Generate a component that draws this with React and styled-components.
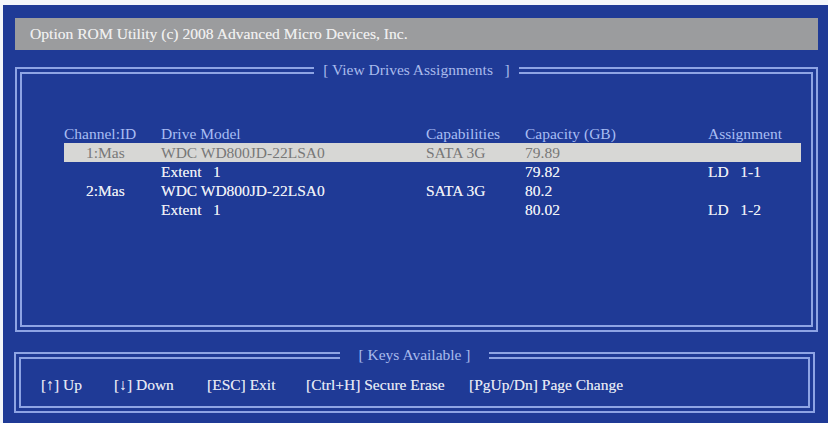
import React from "react";
import styled, { createGlobalStyle } from "styled-components";

const GlobalStyle = createGlobalStyle`
  html, body {
    margin: 0;
    padding: 0;
    background: #f4f6fa;
  }
  body {
    font-family: "Liberation Serif", "Times New Roman", serif;
  }
`;

const LINE = "#8ea4e4";
const BLUE = "#1f3a96";

const Screen = styled.div`
  margin: 5px 0 0 3px;
  width: 825px;
  height: 418px;
  box-sizing: border-box;
  padding: 13px 10px 0 12px;
  background: ${BLUE};
  display: flex;
  flex-direction: column;
  font-family: "Liberation Serif", "Times New Roman", serif;
  font-size: 15.5px;
`;

const TitleBar = styled.div`
  height: 32px;
  background: #9b9c9e;
  color: #eeeeee;
  display: flex;
  align-items: center;
  padding-left: 15px;
  font-size: 15.6px;
  text-shadow: 0 0 0.6px rgba(255, 255, 255, 0.6);
`;

const Frame = styled.fieldset`
  margin: ${(p) => p.$margin};
  padding: 0;
  height: ${(p) => p.$height}px;
  box-sizing: border-box;
  border: 7px double ${LINE};
  min-width: 0;
`;

const Legend = styled.legend`
  margin: 0 auto;
  padding: 0 ${(p) => p.$pad}px;
  color: #a9bbec;
  font-size: 15.5px;
  line-height: 16px;
  white-space: pre;
`;

const Table = styled.div`
  margin: ${(p) => p.$top}px 0 0 42px;
  width: 737px;
  display: grid;
  grid-template-columns: 97px 265px 99px 183px 1fr;
  grid-auto-rows: 19px;
  line-height: 19px;
`;

const Row = styled.div`
  display: contents;
`;

const Cell = styled.div`
  white-space: pre;
  padding-left: ${(p) => p.$indent || 0}px;
  color: ${(p) => (p.$head ? "#a8bdf3" : p.$selected ? "#777878" : "#eceef5")};
  background: ${(p) => (p.$selected ? "#d7d7d5" : "transparent")};
  text-shadow: ${(p) => (p.$head || p.$selected ? "none" : "0 0 0.6px rgba(255, 255, 255, 0.7)")};
`;

const Keys = styled.div`
  margin: 12px 0 0 20px;
  display: grid;
  grid-template-columns: 73px 93px 99px 163px auto;
  color: #e2e6f3;
  line-height: 19px;
  white-space: pre;
  text-shadow: 0 0 0.6px rgba(255, 255, 255, 0.6);
`;

const columns = ["Channel:ID", "Drive Model", "Capabilities", "Capacity (GB)", "Assignment"];

const drives = [
  { ch: "1:Mas", model: "WDC WD800JD-22LSA0", cap: "SATA 3G", size: "79.89", assign: "", selected: true, indent: 22 },
  { ch: "", model: "Extent   1", cap: "", size: "79.82", assign: "LD   1-1" },
  { ch: "2:Mas", model: "WDC WD800JD-22LSA0", cap: "SATA 3G", size: "80.2", assign: "", indent: 22 },
  { ch: "", model: "Extent   1", cap: "", size: "80.02", assign: "LD   1-2" },
];

const keys = ["[↑] Up", "[↓] Down", "[ESC] Exit", "[Ctrl+H] Secure Erase", "[PgUp/Dn] Page Change"];

export default function App() {
  return (
    <>
      <GlobalStyle />
      <Screen>
        <TitleBar>Option ROM Utility (c) 2008 Advanced Micro Devices, Inc.</TitleBar>

        <Frame $margin="12px 0 0 0" $height={270}>
          <Legend $pad={9}>[ View Drives Assignments   ]</Legend>
          <Table $top={46}>
            <Row>
              {columns.map((c) => (
                <Cell key={c} $head>
                  {c}
                </Cell>
              ))}
            </Row>
            {drives.map((d, i) => (
              <Row key={i}>
                <Cell $selected={d.selected} $indent={d.indent}>{d.ch}</Cell>
                <Cell $selected={d.selected}>{d.model}</Cell>
                <Cell $selected={d.selected}>{d.cap}</Cell>
                <Cell $selected={d.selected}>{d.size}</Cell>
                <Cell $selected={d.selected}>{d.assign}</Cell>
              </Row>
            ))}
          </Table>
        </Frame>

        <Frame $margin="15px 3px 0 -1px" $height={66}>
          <Legend $pad={18}>[ Keys Available ]</Legend>
          <Keys>
            {keys.map((k) => (
              <span key={k}>{k}</span>
            ))}
          </Keys>
        </Frame>
      </Screen>
    </>
  );
}
